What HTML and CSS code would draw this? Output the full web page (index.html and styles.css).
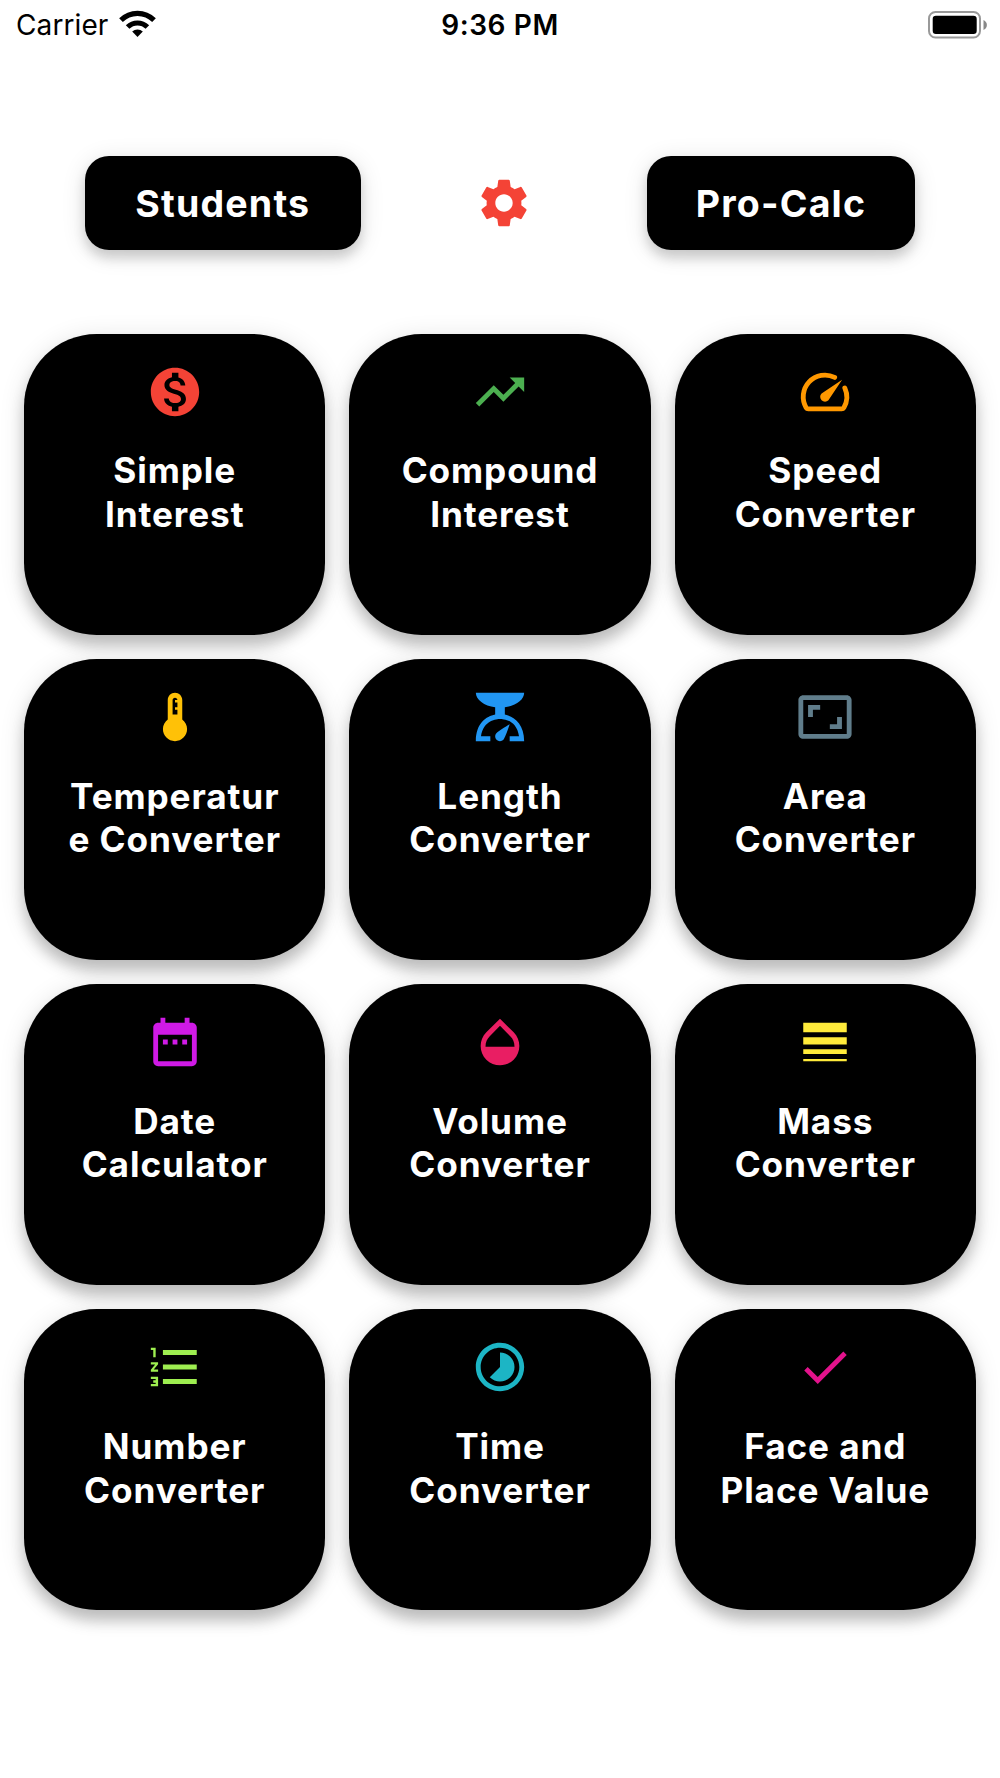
FILE: index.html
```html
<!DOCTYPE html>
<html lang="en">
<head>
<meta charset="utf-8">
<title>Calculator</title>
<link rel="stylesheet" href="styles.css">
</head>
<body>
<header class="status">
  <div class="carrier"><span>Carrier</span>
    <svg class="wifi" viewBox="0 0 37 27"><path d="M18.500 27.000L13.200 21.600A7.600 7.600 0 0 1 23.800 21.600Z"/><path d="M8.600 17.000A14 14 0 0 1 28.400 17.000" fill="none" stroke="#000" stroke-width="5"/><path d="M2 10.200A23.300 23.300 0 0 1 35 10.200" fill="none" stroke="#000" stroke-width="5.200"/></svg>
  </div>
  <time class="time">9:36 PM</time>
  <svg class="battery" viewBox="0 0 60 28"><rect x="1" y="1" width="51" height="25.500" rx="6.500" fill="none" stroke="#999" stroke-width="2"/><rect x="4.700" y="4.700" width="44" height="18.300" rx="3.200"/><path d="M55.500 9C60 11 60 17 55.500 19Z" fill="#888"/></svg>
</header>
<nav class="tabs">
  <button class="tab students">Students</button>
  <svg class="icon gear" viewBox="0 0 24 24"><path d="M19.140 12.940c.04-.3.06-.61.06-.94 0-.32-.02-.64-.07-.94l2.030-1.580c.18-.14.23-.41.12-.61l-1.920-3.320c-.12-.22-.37-.29-.59-.22l-2.390.96c-.5-.38-1.030-.7-1.620-.94l-.36-2.540c-.04-.24-.24-.41-.48-.41h-3.840c-.24 0-.43.17-.47.41l-.36 2.540c-.59.24-1.130.57-1.620.94l-2.390-.96c-.22-.08-.47 0-.59.22L2.740 8.870c-.12.21-.08.47.12.61l2.030 1.580c-.05.3-.09.63-.09.94s.02.64.07.94l-2.030 1.580c-.18.14-.23.41-.12.61l1.920 3.320c.12.22.37.29.59.22l2.390-.96c.5.38 1.030.7 1.620.94l.36 2.540c.05.24.24.41.48.41h3.840c.24 0 .44-.17.47-.41l.36-2.540c.59-.24 1.130-.56 1.620-.94l2.390.96c.22.08.47 0 .59-.22l1.920-3.320c.12-.22.07-.47-.12-.61l-2.010-1.580zM12 15.600c-1.980 0-3.600-1.620-3.600-3.600s1.620-3.600 3.600-3.600 3.600 1.620 3.600 3.600-1.620 3.600-3.600 3.600z"/></svg>
  <button class="tab pro">Pro-Calc</button>
</nav>
<main class="grid">
  <article class="card">
    <svg class="icon red" viewBox="0 0 24 24"><path d="M12 2C6.480 2 2 6.480 2 12s4.480 10 10 10 10-4.480 10-10S17.520 2 12 2zm1.410 16.090V20h-2.670v-1.930c-1.710-.36-3.160-1.460-3.270-3.400h1.960c.1 1.050.82 1.870 2.650 1.870 1.960 0 2.400-.98 2.400-1.590 0-.83-.44-1.610-2.670-2.140-2.480-.6-4.180-1.620-4.180-3.670 0-1.720 1.390-2.840 3.110-3.210V4h2.670v1.950c1.860.45 2.790 1.860 2.850 3.390H14.300c-.05-1.110-.64-1.870-2.220-1.870-1.500 0-2.400.68-2.400 1.640 0 .84.65 1.390 2.670 1.910s4.180 1.390 4.180 3.910c-.01 1.830-1.380 2.830-3.120 3.160z"/></svg>
    <h2>Simple Interest</h2>
  </article>
  <article class="card">
    <svg class="icon green" viewBox="0 0 24 24"><path d="M16 6l2.290 2.290-4.880 4.880-4-4L2 16.590 3.410 18l6-6 4 4 6.300-6.290L22 12V6z"/></svg>
    <h2>Compound Interest</h2>
  </article>
  <article class="card">
    <svg class="icon orange" viewBox="0 0 24 24"><path d="M16 5.940A9 9 0 0 0 4.200 18.500Q4.500 19 5.070 19H18.930Q19.500 19 19.800 18.500A9 9 0 0 0 20.200 10.300" fill="none" stroke="currentColor" stroke-width="2" stroke-linecap="round"/><path d="M10.590 15.410a2 2 0 0 0 2.830 0l5.660-8.490-8.490 5.660a2 2 0 0 0 0 2.830z"/></svg>
    <h2>Speed Converter</h2>
  </article>
  <article class="card">
    <svg class="icon amber" viewBox="0 0 24 24"><path d="M15 13V5c0-1.660-1.340-3-3-3S9 3.340 9 5v8c-1.210.91-2 2.370-2 4 0 2.760 2.240 5 5 5s5-2.240 5-5c0-1.630-.79-3.090-2-4zm-4-8c0-.55.45-1 1-1s1 .45 1 1h-1v1h1v2h-1v1h1v2h-2V5z"/></svg>
    <h2>Temperature Converter</h2>
  </article>
  <article class="card">
    <svg class="icon blue" viewBox="0 0 24 24"><path d="M14 11V8c4.560-.58 8-3.100 8-6H2c0 2.900 3.440 5.420 8 6v3c-3.680.73-8 3.610-8 11h6v-2H4.130c.93-6.830 6.650-7.200 7.870-7.200s6.940.37 7.870 7.200H16v2h6c0-7.390-4.320-10.270-8-11z"/><path d="M12 22c-1.100 0-2-.9-2-2 0-.55.22-1.050.59-1.410C11.390 17.790 16 15 16 15s-1.790 5.610-2.590 6.410C13.050 21.780 12.550 22 12 22z"/></svg>
    <h2>Length Converter</h2>
  </article>
  <article class="card">
    <svg class="icon slate" viewBox="0 0 24 24"><path d="M19 12h-2v3h-3v2h5v-5zM7 9h3V7H5v5h2V9zm14-6H3c-1.100 0-2 .9-2 2v14c0 1.100.9 2 2 2h18c1.100 0 2-.9 2-2V5c0-1.100-.9-2-2-2zm0 16.010H3V4.990h18v14.020z"/></svg>
    <h2>Area Converter</h2>
  </article>
  <article class="card">
    <svg class="icon purple" viewBox="0 0 24 24"><path d="M9 11H7v2h2v-2zm4 0h-2v2h2v-2zm4 0h-2v2h2v-2zm2-7h-1V2h-2v2H8V2H6v2H5c-1.110 0-1.990.9-1.990 2L3 20c0 1.100.89 2 2 2h14c1.100 0 2-.9 2-2V6c0-1.100-.9-2-2-2zm0 16H5V9h14v11z"/></svg>
    <h2>Date Calculator</h2>
  </article>
  <article class="card">
    <svg class="icon pink" viewBox="0 0 24 24"><path d="M17.660 8L12 2.350 6.340 8C4.780 9.560 4 11.640 4 13.640s.78 4.110 2.340 5.670 3.610 2.350 5.660 2.350 4.100-.79 5.660-2.350S20 15.640 20 13.640 19.220 9.560 17.660 8zM6 14c.01-2 .62-3.270 1.760-4.400L12 5.270l4.240 4.380C17.380 10.770 17.990 12 18 14H6z"/></svg>
    <h2>Volume Converter</h2>
  </article>
  <article class="card">
    <svg class="icon yellow" viewBox="0 0 24 24"><path d="M3 17h18v-2H3v2zm0 3h18v-1H3v1zm0-7h18v-3H3v3zm0-9v4h18V4H3z"/></svg>
    <h2>Mass Converter</h2>
  </article>
  <article class="card">
    <svg class="icon lime" viewBox="0 0 24 24"><path d="M2 17h2v.5H3v1h1v.5H2v1h3v-4H2v1zm1-9h1V4H2v1h1v3zm-1 3h1.800L2 13.100v.9h3v-1H3.200L5 10.900V10H2v1zm5-6v2h14V5H7zm0 14h14v-2H7v2zm0-6h14v-2H7v2z"/></svg>
    <h2>Number Converter</h2>
  </article>
  <article class="card">
    <svg class="icon teal" viewBox="0 0 24 24"><path d="M16.240 7.760C15.070 6.590 13.540 6 12 6v6l-4.240 4.240c2.340 2.340 6.140 2.340 8.490 0 2.340-2.340 2.340-6.140-.01-8.480zM12 2C6.480 2 2 6.480 2 12s4.480 10 10 10 10-4.480 10-10S17.520 2 12 2zm0 18c-4.420 0-8-3.580-8-8s3.580-8 8-8 8 3.580 8 8-3.580 8-8 8z"/></svg>
    <h2>Time Converter</h2>
  </article>
  <article class="card">
    <svg class="icon magenta" viewBox="0 0 24 24"><path d="M9 16.170L4.830 12l-1.420 1.410L9 19 21 7l-1.410-1.410z"/></svg>
    <h2>Face and Place Value</h2>
  </article>
</main>
</body>
</html>
```

FILE: styles.css
```css
* { box-sizing: border-box; }
body {
  margin: 0;
  min-height: 1778px;
  background: #fff;
  color: #000;
  font-family: Inter, "Liberation Sans", sans-serif;
}
.status {
  display: grid;
  grid-template-columns: 1fr auto 1fr;
  align-items: start;
  height: 48px;
  padding: 9px 12px 0;
}
.carrier { display: flex; gap: 11px; padding-left: 4px; font-size: 28px; line-height: 33px; letter-spacing: 0.1px; }
.wifi { width: 37px; height: 27px; margin-top: 1px; }
.time { font-size: 28px; line-height: 33px; font-weight: 600; letter-spacing: 0.600px; }
.battery { width: 60px; height: 28px; margin-top: 1.500px; justify-self: end; }
.tabs {
  display: flex;
  align-items: center;
  justify-content: space-between;
  height: 95px;
  margin: 107.500px 85px 0;
}
.tab {
  height: 94.500px;
  padding: 0;
  border: 0;
  border-radius: 24px;
  background: #000;
  color: #fff;
  font: 700 37.500px/45px Inter, "Liberation Sans", sans-serif;
  letter-spacing: 1.200px;
  box-shadow: 0 8px 12px rgba(0, 0, 0, .15), 0 4px 24px rgba(0, 0, 0, .12);
}
.students { width: 275.500px; }
.pro { width: 268px; }
.icon { display: block; width: 58px; height: 58px; fill: currentColor; }
.gear { color: #f44336; }
.grid {
  display: grid;
  grid-template-columns: repeat(3, 1fr);
  grid-auto-rows: 301.100px;
  gap: 24.150px;
  padding: 83px 24.150px 0;
}
.card {
  display: flex;
  flex-direction: column;
  align-items: center;
  padding-top: 29px;
  border-radius: 72.500px;
  background: #000;
  box-shadow: 0 11px 14px rgba(0, 0, 0, .2), 0 4px 26px rgba(0, 0, 0, .12);
}
.card h2 {
  width: 224px;
  margin: 28.800px 0 0;
  color: #fff;
  font-size: 35.200px;
  font-weight: 700;
  line-height: 43.500px;
  letter-spacing: 0.900px;
  text-align: center;
  overflow-wrap: break-word;
}
.red { color: #f44336; }
.green { color: #4caf50; }
.orange { color: #ff9800; }
.amber { color: #ffc107; }
.blue { color: #2196f3; }
.slate { color: #607d8b; }
.purple { color: #d01ae6; }
.pink { color: #e91e63; }
.yellow { color: #ffeb3b; }
.lime { color: #9eee50; }
.teal { color: #1cb5c5; }
.magenta { color: #e3128c; }
```
